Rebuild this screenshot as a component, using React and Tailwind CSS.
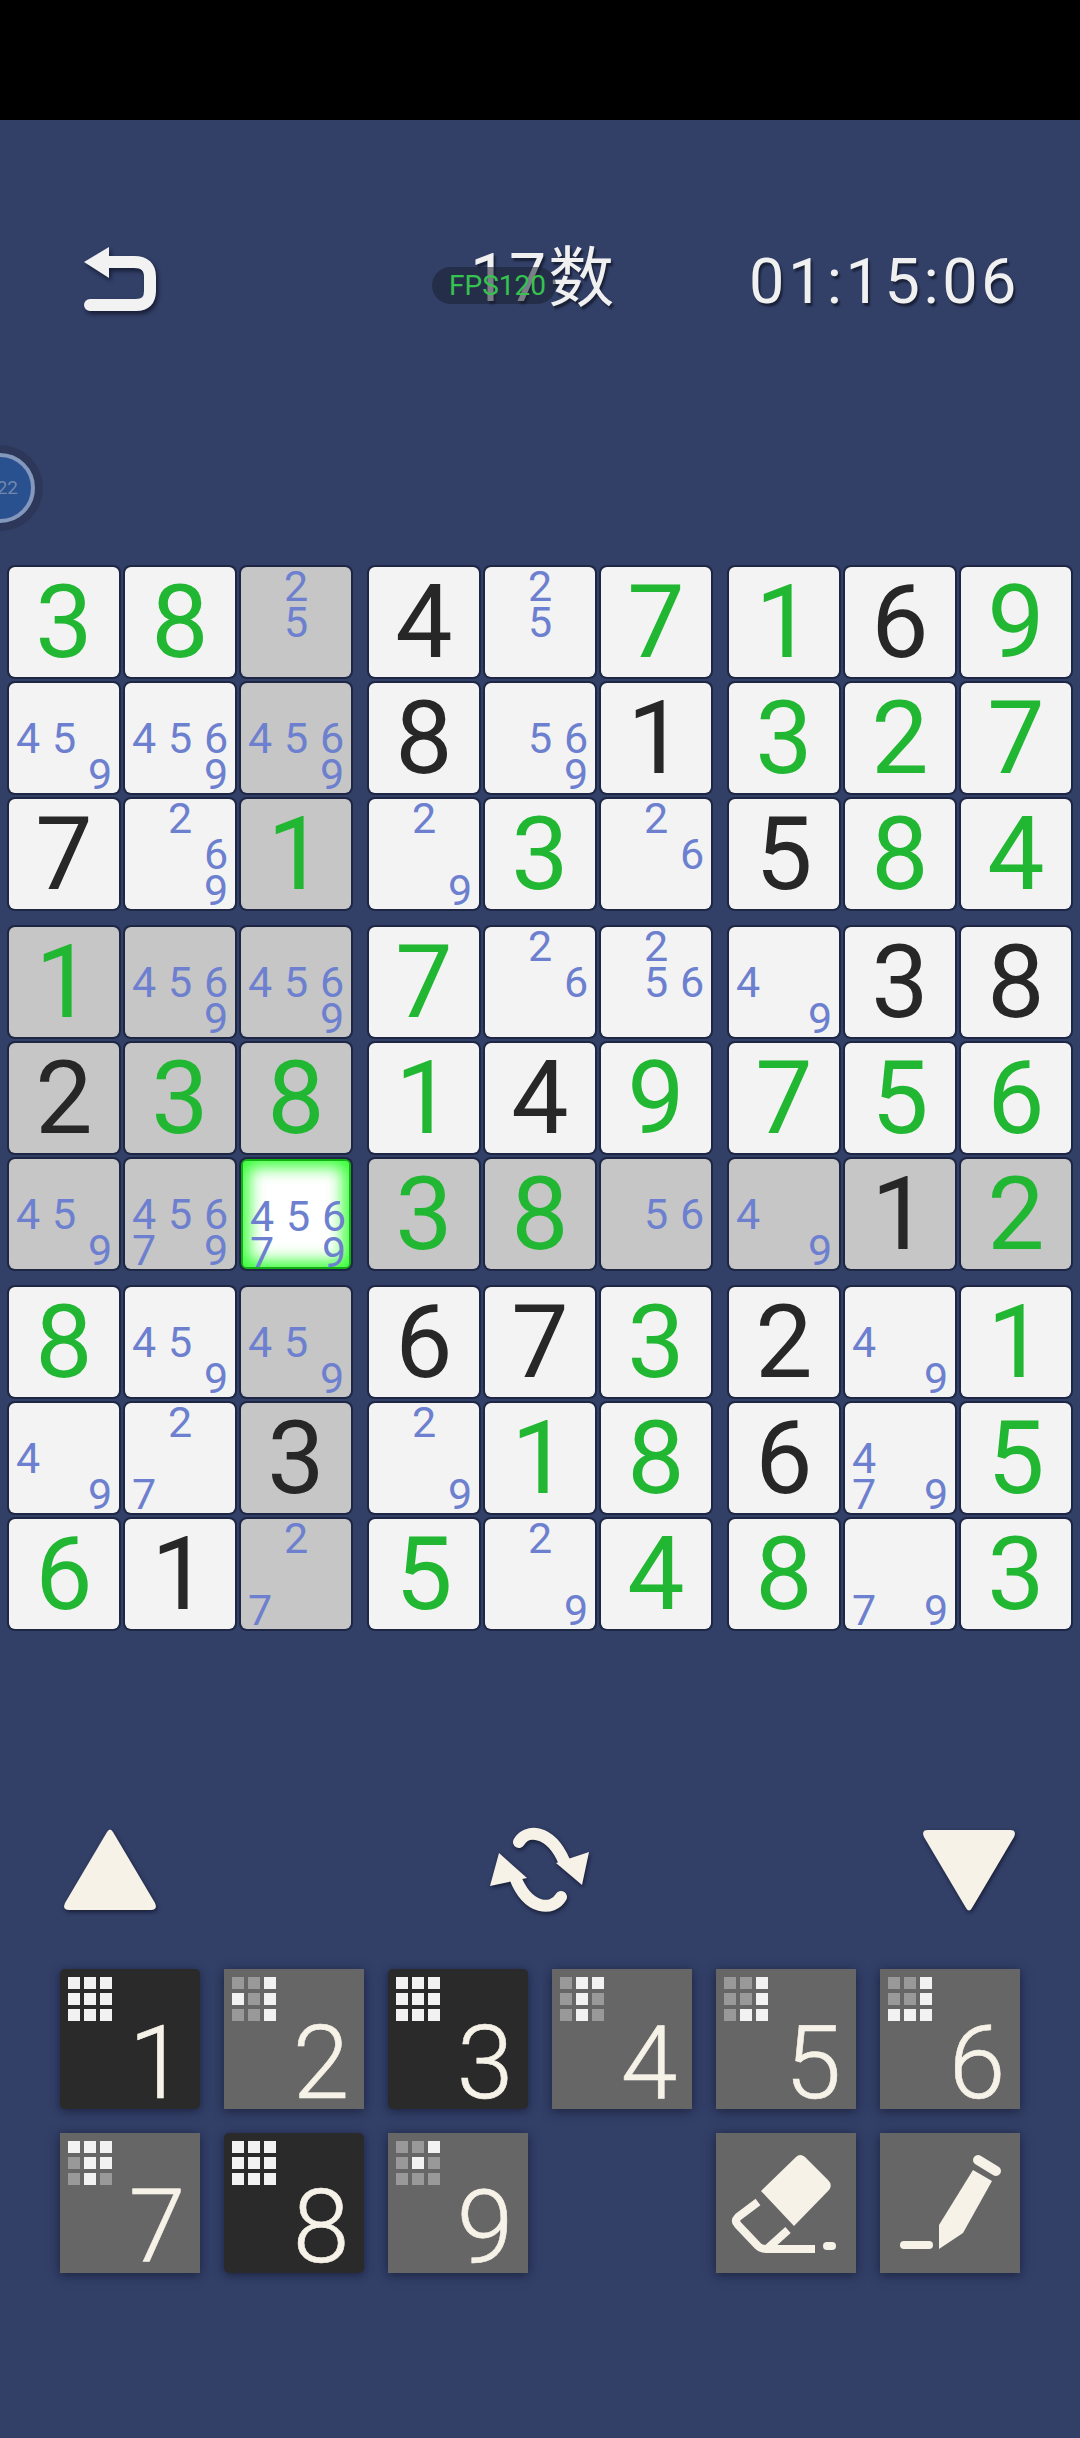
import React from 'react';

const FONT = "font-['Roboto','Noto_Sans_CJK_SC',sans-serif]";

// g = given in green, k = black, n = pencil notes
const board = [
  ['g3', 'g8', 'n25', 'k4', 'n25', 'g7', 'g1', 'k6', 'g9'],
  ['n459', 'n4569', 'n4569', 'k8', 'n569', 'k1', 'g3', 'g2', 'g7'],
  ['k7', 'n269', 'g1', 'n29', 'g3', 'n26', 'k5', 'g8', 'g4'],
  ['g1', 'n4569', 'n4569', 'g7', 'n26', 'n256', 'n49', 'k3', 'k8'],
  ['k2', 'g3', 'g8', 'g1', 'k4', 'g9', 'g7', 'g5', 'g6'],
  ['n459', 'n45679', 'n45679', 'g3', 'g8', 'n56', 'n49', 'k1', 'g2'],
  ['g8', 'n459', 'n459', 'k6', 'k7', 'g3', 'k2', 'n49', 'g1'],
  ['n49', 'n27', 'k3', 'n29', 'g1', 'g8', 'k6', 'n479', 'g5'],
  ['g6', 'k1', 'n27', 'g5', 'n29', 'g4', 'g8', 'n79', 'g3'],
];

const SELECTED = [5, 2];

const isGray = (r, c) => {
  if (r === SELECTED[0] || c === SELECTED[1]) return true;
  return r >= 3 && r <= 5 && c <= 2;
};

const Cell = ({ value, r, c }) => {
  const selected = r === SELECTED[0] && c === SELECTED[1];
  const type = value[0];
  const digits = value.slice(1);
  let bg = isGray(r, c) ? 'bg-[#c6c6c6]' : 'bg-[#f3f3f3]';
  if (selected) bg = 'bg-white border-[2px] border-[#12b012] shadow-[inset_0_0_16px_6px_#33ff33]';

  if (type === 'n') {
    return (
      <div className={`relative w-[110px] h-[110px] rounded-[6px] ring-2 ring-[#1d2744] ${bg}`}>
        <div className="absolute left-px top-px grid grid-cols-[36px_36px_36px] grid-rows-[36px_36px_36px] text-[43px] font-normal leading-[36px] text-center text-[#6c80cf]">
          {['1', '2', '3', '4', '5', '6', '7', '8', '9'].map((d) => (
            <span key={d}>{digits.includes(d) ? d : ''}</span>
          ))}
        </div>
      </div>
    );
  }
  return (
    <div
      className={`flex items-center justify-center w-[110px] h-[110px] rounded-[6px] ring-2 ring-[#1d2744] text-[102px] leading-none ${bg} ${
        type === 'g' ? 'text-[#22b733]' : 'text-[#272727]'
      }`}
    >
      {digits}
    </div>
  );
};

const Box = ({ boxRow, boxCol }) => {
  const cells = [];
  for (let r = boxRow * 3; r < boxRow * 3 + 3; r++) {
    for (let c = boxCol * 3; c < boxCol * 3 + 3; c++) {
      cells.push(<Cell key={`${r}-${c}`} value={board[r][c]} r={r} c={c} />);
    }
  }
  return <div className="grid grid-cols-[110px_110px_110px] gap-[6px]">{cells}</div>;
};

const numberPad = [
  { n: 1, on: '111111111', dark: true },
  { n: 2, on: '001101001' },
  { n: 3, on: '111111111', dark: true },
  { n: 4, on: '011010010' },
  { n: 5, on: '001001011' },
  { n: 6, on: '001001111' },
  { n: 7, on: '111011010' },
  { n: 8, on: '111111111', dark: true },
  { n: 9, on: '001010000' },
];

const PadButton = ({ children, dark }) => (
  <div
    className={`relative w-[140px] h-[140px] shadow-[0_2px_10px_rgba(20,26,50,0.75)] ${
      dark ? 'bg-[#2a2a2a] rounded-[5px]' : 'bg-[#666666]'
    }`}
  >
    {children}
  </div>
);

const NumberButton = ({ n, on, dark }) => (
  <PadButton dark={dark}>
    <div className="absolute left-[8px] top-[8px] grid grid-cols-[12px_12px_12px] grid-rows-[12px_12px_12px] gap-x-[4px] gap-y-[4px]">
      {on.split('').map((v, i) => (
        <span key={i} className={v === '1' ? 'bg-[#f2f2f2]' : 'bg-[#999999]'} />
      ))}
    </div>
    <span className="absolute right-[11px] bottom-[-5px] w-[64px] text-center text-[102px] leading-[102px] font-light text-[#f6f2e8] [-webkit-text-stroke:0.6px_#f6f2e8]">
      {n}
    </span>
  </PadButton>
);

const EraserIcon = () => (
  <svg viewBox="0 0 140 140" className="w-[140px] h-[140px]" fill="none">
    <path d="M80 24 Q84 20 89 24 L112 47 Q117 52 113 57 L78 93 L45 58 Z" fill="#f6f2e8" />
    <path
      d="M42 69 L22 84 Q18 88 22 92 L42 113 Q45 116 50 116 H99 M72 97 L52 115"
      stroke="#f6f2e8"
      strokeWidth="8"
      strokeLinejoin="round"
    />
    <path d="M111 113 H116" stroke="#f6f2e8" strokeWidth="8" strokeLinecap="round" />
  </svg>
);

const PencilIcon = () => (
  <svg viewBox="0 0 140 140" className="w-[140px] h-[140px]" fill="none">
    <path d="M98 27 L116 38" stroke="#f6f2e8" strokeWidth="10" strokeLinecap="round" />
    <path d="M93 37 L112 48 L83 100 L59 116 L59 92 Z" fill="#f6f2e8" />
    <path d="M24 112 H49" stroke="#f6f2e8" strokeWidth="8" strokeLinecap="round" />
  </svg>
);

const BackIcon = () => (
  <svg viewBox="0 0 76 68" className="w-[76px] h-[68px] drop-shadow-[2px_3px_2px_rgba(15,20,40,0.8)]" fill="none">
    <path d="M0 15 L25 0 V31 Z" fill="#f2f2f2" />
    <path d="M20 15 H50 Q66 15 66 30 V44 Q66 58 52 58 H6" stroke="#f2f2f2" strokeWidth="12" strokeLinecap="round" />
  </svg>
);

const RefreshIcon = () => (
  <svg viewBox="0 0 99 85" className="w-[99px] h-[85px] drop-shadow-[1px_2px_2px_rgba(15,20,40,0.8)]" fill="none">
    <path d="M29 15 C36 2 60 2 74 34" stroke="#f6f2e8" strokeWidth="12" strokeLinecap="round" />
    <path d="M92 58 L66 36 L99 25 Z" fill="#f6f2e8" />
    <path d="M71 70 C63 84 38 84 25 50" stroke="#f6f2e8" strokeWidth="12" strokeLinecap="round" />
    <path d="M9 26 L0 59 L37 51 Z" fill="#f6f2e8" />
  </svg>
);

const TriangleUp = () => (
  <svg viewBox="0 0 94 82" className="w-[94px] h-[82px] drop-shadow-[1px_2px_2px_rgba(15,20,40,0.8)]">
    <path d="M44 3 Q47 -2 50 3 L92 74 Q95 81 88 81 H6 Q-1 81 2 74 Z" fill="#f6f2e8" />
  </svg>
);

const TriangleDown = () => (
  <svg viewBox="0 0 94 82" className="w-[94px] h-[82px] drop-shadow-[1px_2px_2px_rgba(15,20,40,0.8)]">
    <path d="M44 79 Q47 84 50 79 L92 8 Q95 1 88 1 H6 Q-1 1 2 8 Z" fill="#f6f2e8" />
  </svg>
);

export default function App() {
  return (
    <div className={`relative w-[1080px] h-[2438px] bg-[#323f67] overflow-hidden ${FONT}`}>
      <div className="h-[120px] bg-black" />

      {/* top bar */}
      <div className="relative flex items-start h-[447px] pt-[127px]">
        <div className="ml-[84px]">
          <BackIcon />
        </div>
        <div className="ml-[310px] mt-[-8px] text-[66px] leading-[80px] font-normal text-[#f0f0f0] tracking-[2px] [text-shadow:2px_3px_2px_#1a2238]">
          17数
        </div>
        <div className="absolute right-[60px] top-[122px] text-[63px] leading-[80px] font-normal text-[#f0f0f0] tracking-[3.5px] [text-shadow:2px_3px_2px_#1a2238]">
          01:15:06
        </div>
        {/* fps overlay */}
        <div className="absolute left-[432px] top-[147px] flex items-center w-[124px] h-[37px] pl-[17px] rounded-full bg-[rgba(28,32,48,0.55)] text-[28px] leading-none text-[#35c24e]">
          FPS120
        </div>
        {/* floating assistant ball */}
        <div className="absolute left-[-43px] top-[325px] flex items-center justify-center w-[86px] h-[86px] rounded-full bg-[#2c3759]">
          <div className="flex items-center justify-end w-[70px] h-[70px] pr-[13px] rounded-full bg-[#29508f] border-[4px] border-[#8497bd] text-[19px] text-[#7088b0]">
            22
          </div>
        </div>
      </div>

      {/* board */}
      <div className="grid grid-cols-[342px_342px_342px] gap-[18px] ml-[9px]">
        {[0, 1, 2].map((br) => [0, 1, 2].map((bc) => <Box key={`${br}-${bc}`} boxRow={br} boxCol={bc} />))}
      </div>

      {/* arrows */}
      <div className="flex items-center justify-between mt-[198px] pl-[63px] pr-[64px]">
        <TriangleUp />
        <RefreshIcon />
        <TriangleDown />
      </div>

      {/* number pad */}
      <div className="grid grid-cols-[140px_140px_140px_140px_140px_140px] gap-x-[24px] gap-y-[24px] mt-[57px] ml-[60px]">
        {numberPad.map((b) => (
          <NumberButton key={b.n} {...b} />
        ))}
        <div />
        <PadButton>
          <EraserIcon />
        </PadButton>
        <PadButton>
          <PencilIcon />
        </PadButton>
      </div>
    </div>
  );
}
